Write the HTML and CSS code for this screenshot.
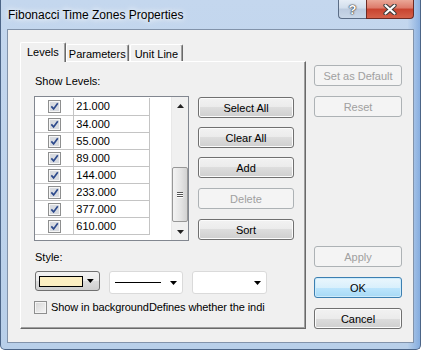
FILE: index.html
```html
<!DOCTYPE html>
<html lang="en">
<head>
  <meta charset="UTF-8">
  <title>Fibonacci Time Zones Properties</title>
  <link rel="stylesheet" href="styles.css">
</head>
<body>
  <div class="win">
    <div class="titlebar">
      <span class="title">Fibonacci Time Zones Properties</span>
      <div class="capbtns">
        <div class="cap help">?</div>
        <div class="cap close">
          <svg width="14" height="11" viewBox="0 0 14 11"><path d="M2.5 1.5 11.5 9.5M11.5 1.5 2.5 9.5" stroke="#3a3a3a" stroke-width="4.2" stroke-linecap="round"/><path d="M2.5 1.5 11.5 9.5M11.5 1.5 2.5 9.5" stroke="#fff" stroke-width="2.2" stroke-linecap="round"/></svg>
        </div>
      </div>
    </div>

    <div class="client">
      <div class="sheet">
        <div class="tabs">
          <div class="tab sel">Levels</div>
          <div class="tab t-params">Parameters</div>
          <div class="tab t-unit">Unit Line</div>
        </div>
        <div class="panel">
          <div class="lbl">Show Levels:</div>
          <div class="levels-row">
            <div class="list">
              <div class="grid">
                <div class="row"><div class="c1"><svg class="ck" width="13" height="13" viewBox="0 0 13 13"><rect x="0.5" y="0.5" width="12" height="12" fill="#f6f6f6" stroke="#8e8f8f"/><rect x="2" y="2" width="9" height="9" fill="#d8dbe0"/><path d="M3.3 6.4 5.6 8.9 9.8 3.2" fill="none" stroke="#2d4a8c" stroke-width="1.7"/></svg></div><div class="c2">21.000</div></div>
                <div class="row"><div class="c1"><svg class="ck" width="13" height="13" viewBox="0 0 13 13"><rect x="0.5" y="0.5" width="12" height="12" fill="#f6f6f6" stroke="#8e8f8f"/><rect x="2" y="2" width="9" height="9" fill="#d8dbe0"/><path d="M3.3 6.4 5.6 8.9 9.8 3.2" fill="none" stroke="#2d4a8c" stroke-width="1.7"/></svg></div><div class="c2">34.000</div></div>
                <div class="row"><div class="c1"><svg class="ck" width="13" height="13" viewBox="0 0 13 13"><rect x="0.5" y="0.5" width="12" height="12" fill="#f6f6f6" stroke="#8e8f8f"/><rect x="2" y="2" width="9" height="9" fill="#d8dbe0"/><path d="M3.3 6.4 5.6 8.9 9.8 3.2" fill="none" stroke="#2d4a8c" stroke-width="1.7"/></svg></div><div class="c2">55.000</div></div>
                <div class="row"><div class="c1"><svg class="ck" width="13" height="13" viewBox="0 0 13 13"><rect x="0.5" y="0.5" width="12" height="12" fill="#f6f6f6" stroke="#8e8f8f"/><rect x="2" y="2" width="9" height="9" fill="#d8dbe0"/><path d="M3.3 6.4 5.6 8.9 9.8 3.2" fill="none" stroke="#2d4a8c" stroke-width="1.7"/></svg></div><div class="c2">89.000</div></div>
                <div class="row"><div class="c1"><svg class="ck" width="13" height="13" viewBox="0 0 13 13"><rect x="0.5" y="0.5" width="12" height="12" fill="#f6f6f6" stroke="#8e8f8f"/><rect x="2" y="2" width="9" height="9" fill="#d8dbe0"/><path d="M3.3 6.4 5.6 8.9 9.8 3.2" fill="none" stroke="#2d4a8c" stroke-width="1.7"/></svg></div><div class="c2">144.000</div></div>
                <div class="row"><div class="c1"><svg class="ck" width="13" height="13" viewBox="0 0 13 13"><rect x="0.5" y="0.5" width="12" height="12" fill="#f6f6f6" stroke="#8e8f8f"/><rect x="2" y="2" width="9" height="9" fill="#d8dbe0"/><path d="M3.3 6.4 5.6 8.9 9.8 3.2" fill="none" stroke="#2d4a8c" stroke-width="1.7"/></svg></div><div class="c2">233.000</div></div>
                <div class="row"><div class="c1"><svg class="ck" width="13" height="13" viewBox="0 0 13 13"><rect x="0.5" y="0.5" width="12" height="12" fill="#f6f6f6" stroke="#8e8f8f"/><rect x="2" y="2" width="9" height="9" fill="#d8dbe0"/><path d="M3.3 6.4 5.6 8.9 9.8 3.2" fill="none" stroke="#2d4a8c" stroke-width="1.7"/></svg></div><div class="c2">377.000</div></div>
                <div class="row"><div class="c1"><svg class="ck" width="13" height="13" viewBox="0 0 13 13"><rect x="0.5" y="0.5" width="12" height="12" fill="#f6f6f6" stroke="#8e8f8f"/><rect x="2" y="2" width="9" height="9" fill="#d8dbe0"/><path d="M3.3 6.4 5.6 8.9 9.8 3.2" fill="none" stroke="#2d4a8c" stroke-width="1.7"/></svg></div><div class="c2">610.000</div></div>
              </div>
              <div class="vscroll">
                <div class="sb-btn"><svg width="7" height="4" viewBox="0 0 7 4"><polygon points="0,4 3.5,0 7,4" fill="#222"/></svg></div>
                <div class="sb-track">
                  <div class="thumb"><span></span><span></span><span></span></div>
                </div>
                <div class="sb-btn"><svg width="7" height="4" viewBox="0 0 7 4"><polygon points="0,0 7,0 3.5,4" fill="#222"/></svg></div>
              </div>
            </div>
            <div class="btn-col">
              <button class="btn">Select All</button>
              <button class="btn">Clear All</button>
              <button class="btn">Add</button>
              <button class="btn dis gap10">Delete</button>
              <button class="btn gap10">Sort</button>
            </div>
          </div>

          <div class="lbl style-lbl">Style:</div>
          <div class="style-row">
            <div class="color-combo">
              <span class="swatch"></span>
              <svg width="7" height="4" viewBox="0 0 7 4"><polygon points="0,0 7,0 3.5,4" fill="#000"/></svg>
            </div>
            <div class="combo">
              <span class="line"></span>
              <svg width="7" height="4" viewBox="0 0 7 4"><polygon points="0,0 7,0 3.5,4" fill="#000"/></svg>
            </div>
            <div class="combo">
              <span class="line none"></span>
              <svg width="7" height="4" viewBox="0 0 7 4"><polygon points="0,0 7,0 3.5,4" fill="#000"/></svg>
            </div>
          </div>

          <div class="bg-check">
            <span class="cb"></span>
            <span class="cb-text">Show in backgroundDefines whether the indi</span>
          </div>
        </div>
      </div>

      <div class="side">
        <button class="btn dis">Set as Default</button>
        <button class="btn dis">Reset</button>
        <button class="btn dis apply">Apply</button>
        <button class="btn def">OK</button>
        <button class="btn">Cancel</button>
      </div>
    </div>
  </div>
</body>
</html>
```

FILE: styles.css
```css
html, body { margin: 0; padding: 0; background: #fff; }
body { font: 11px "Liberation Sans", Arial, sans-serif; color: #000; }

.win {
  width: 421px; height: 350px; box-sizing: border-box;
  border: 1px solid #4c6587; border-top: none;
  border-radius: 0 0 5px 5px;
  background: linear-gradient(90deg, rgba(255,255,255,0) 97%, rgba(70,130,210,.45) 100%),
              linear-gradient(#c4d7ee, #b8cfe9);
  display: flex; flex-direction: column;
}

.titlebar { height: 29px; display: flex; align-items: flex-start; }
.title { padding: 8px 0 0 7px; font-size: 12px; line-height: 14px; text-shadow: 0 0 5px #fff, 0 0 8px #fff; }
.capbtns { margin-left: auto; margin-right: 6px; display: flex; }
.cap {
  height: 19px; box-sizing: border-box; border: 1px solid #5b6d86; border-top: none;
  display: flex; align-items: center; justify-content: center;
}
.help {
  width: 28px; border-radius: 0 0 0 4px; border-right: none;
  background: linear-gradient(#e6edf6 0%, #d2deec 45%, #bccbdf 50%, #c9d7e8 100%);
  font: bold 13px "Liberation Sans", Arial, sans-serif; color: #fff;
  text-shadow: 0 0 1px #333, 0 0 1px #333, 0 0 2px #444;
}
.close {
  width: 48px; border-radius: 0 0 4px 0; border-color: #6d2b24;
  background: linear-gradient(#eaa797 0%, #dd7a69 45%, #c8432f 50%, #d4614a 100%);
}

.client {
  flex: 1; margin: 0 6px 6px; background: #f0f0f0;
  border: 1px solid #8293aa; display: flex;
  padding: 12px 0 0 12px;
}

.sheet { width: 286px; display: flex; flex-direction: column; }
.tabs { height: 19px; display: flex; align-items: flex-end; }
.tab {
  height: 17px; box-sizing: border-box; padding: 3px 2px 0; line-height: 13px;
  border: 1px solid; border-color: #fff #696969 transparent #fff; border-bottom: none;
  box-shadow: inset -1px 0 #a0a0a0; border-radius: 2px 2px 0 0;
  background: #f0f0f0;
}
.tab.sel { height: 20px; padding: 3px 6px 0; margin-bottom: -1px; position: relative; z-index: 1; }
.t-unit { margin-left: 1px; padding: 3px 4px 0; }

.panel {
  height: 268px; box-sizing: border-box;
  border: 1px solid; border-color: #fff #696969 #696969 #fff;
  box-shadow: inset -1px -1px #a0a0a0;
  padding: 13px 0 0 13px;
}
.lbl { line-height: 13px; padding-left: 1px; }

.levels-row { display: flex; margin-top: 8px; align-items: flex-start; }
.list {
  width: 155px; height: 145px; box-sizing: border-box;
  border: 1px solid #828790; background: #fff; display: flex;
}
.grid { flex: 1; padding-top: 1px; }
.row { display: flex; width: 115px; height: 17px; box-sizing: border-box; border-bottom: 1px solid #c4c4c4; }
.row:first-child { height: 18px; }
.c1 { width: 39px; border-right: 1px solid #c4c4c4; display: flex; align-items: center; justify-content: center; }
.c2 { width: 74px; border-right: 1px solid #c4c4c4; padding-left: 2px; line-height: 16px; }
.ck { display: block; }

.vscroll { width: 16px; display: flex; flex-direction: column; background: #f0f0f0; border-left: 1px solid #e8e8e8; }
.sb-btn { height: 17px; display: flex; align-items: center; justify-content: center; }
.sb-track { flex: 1; }
.thumb {
  margin: 53px 0 0 0; height: 55px; box-sizing: border-box;
  border: 1px solid #979797; border-radius: 2px;
  background: linear-gradient(90deg, #f3f3f3, #e4e4e4 55%, #d2d2d2);
  display: flex; flex-direction: column; align-items: center; justify-content: center; gap: 1px;
}
.thumb span { width: 6px; height: 1px; background: #555; box-shadow: 0 1px #fff; }

.btn {
  display: block; height: 21px; box-sizing: border-box; padding: 0;
  border: 1px solid #707070; border-radius: 3px;
  background: linear-gradient(#f2f2f2 0%, #ebebeb 50%, #dddddd 50%, #cfcfcf 100%);
  box-shadow: inset 0 0 0 1px #fbfbfb;
  font: 11px "Liberation Sans", Arial, sans-serif; color: #000;
}
.btn.dis { border-color: #adb2b5; background: #f4f4f4; color: #a0a0a0; box-shadow: none; }
.btn.def {
  border-color: #3c7fb1;
  background: linear-gradient(#eaf6fd 0%, #d9f0fc 50%, #bee6fd 50%, #a7d9f5 100%);
  box-shadow: inset 0 0 0 1px #cdebfb;
}

.btn-col { margin: 1px 0 0 9px; display: flex; flex-direction: column; gap: 9px; }
.btn-col .btn { width: 96px; }
.btn-col .gap10 { margin-top: 1px; }

.style-lbl { margin-top: 10px; }
.style-row { display: flex; align-items: flex-start; margin-top: 7px; }
.color-combo {
  width: 65px; height: 20px; box-sizing: border-box; margin: 0 0 0 1px;
  border: 1px solid #707070; border-radius: 3px;
  background: linear-gradient(#f2f2f2 0%, #ebebeb 50%, #dddddd 50%, #cfcfcf 100%);
  display: flex; align-items: center; padding: 0 5px 0 3px; gap: 4px;
}
.swatch { width: 46px; height: 11px; box-sizing: border-box; border: 1px solid #000; background: #fcefc2; }
.combo {
  width: 74px; height: 23px; box-sizing: border-box; margin-left: 9px;
  border: 1px solid #dadada; border-radius: 3px; background: #fff;
  display: flex; align-items: center; padding: 0 5px 0 5px;
}
.combo + .combo { width: 75px; }
.line { width: 46px; height: 1px; background: #000; margin-right: auto; }
.line.none { background: transparent; }

.bg-check { display: flex; align-items: center; margin-top: 7px; height: 13px; }
.cb {
  width: 13px; height: 13px; box-sizing: border-box; flex: none;
  border: 1px solid #8e8f8f; background: linear-gradient(135deg, #d6d6d6, #f5f5f5);
  box-shadow: inset 0 0 0 1px #f4f4f4;
}
.cb-text { margin-left: 4px; white-space: nowrap; line-height: 13px; letter-spacing: -0.1px; }

.side { width: 88px; margin-left: 8px; padding: 23px 0 13px; display: flex; flex-direction: column; }
.side .btn { width: 88px; }
.side .btn + .btn { margin-top: 10px; }
.side .apply { margin-top: auto !important; }
```
